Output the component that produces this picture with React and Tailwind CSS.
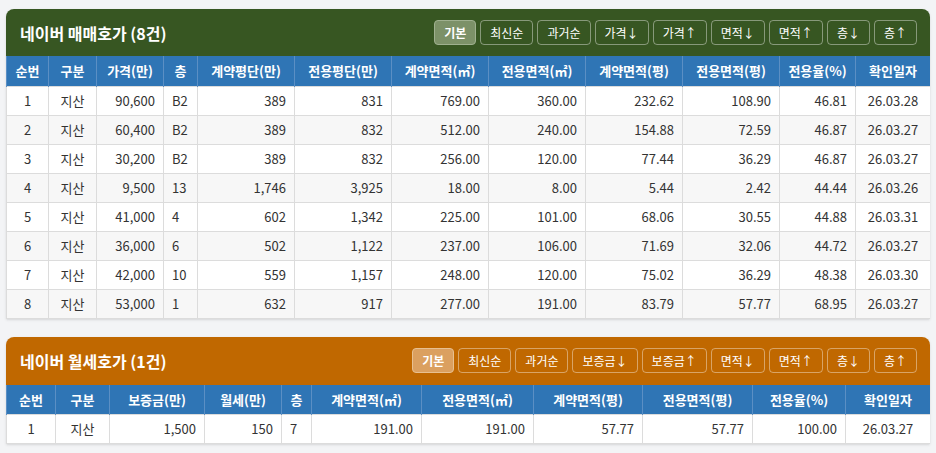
const F = { fontFamily: '"Noto Sans CJK KR", "Noto Sans", sans-serif' };

const sale = [
  ["1","지산","90,600","B2","389","831","769.00","360.00","232.62","108.90","46.81","26.03.28"],
  ["2","지산","60,400","B2","389","832","512.00","240.00","154.88","72.59","46.87","26.03.27"],
  ["3","지산","30,200","B2","389","832","256.00","120.00","77.44","36.29","46.87","26.03.27"],
  ["4","지산","9,500","13","1,746","3,925","18.00","8.00","5.44","2.42","44.44","26.03.26"],
  ["5","지산","41,000","4","602","1,342","225.00","101.00","68.06","30.55","44.88","26.03.31"],
  ["6","지산","36,000","6","502","1,122","237.00","106.00","71.69","32.06","44.72","26.03.27"],
  ["7","지산","42,000","10","559","1,157","248.00","120.00","75.02","36.29","48.38","26.03.30"],
  ["8","지산","53,000","1","632","917","277.00","191.00","83.79","57.77","68.95","26.03.27"],
];
const saleHead = ["순번","구분","가격(만)","층","계약평단(만)","전용평단(만)","계약면적(㎡)","전용면적(㎡)","계약면적(평)","전용면적(평)","전용율(%)","확인일자"];
const saleW = [42,48,67,34,97,97,97,97,97,97,76,75];
const saleAlign = ["c","c","r","l","r","r","r","r","r","r","r","c"];

const rentHead = ["순번","구분","보증금(만)","월세(만)","층","계약면적(㎡)","전용면적(㎡)","계약면적(평)","전용면적(평)","전용율(%)","확인일자"];
const rentW = [49,54,95,77,30,110,112,109,110,93,85];
const rentAlign = ["c","c","r","r","l","r","r","r","r","r","c"];
const rent = [["1","지산","1,500","150","7","191.00","191.00","57.77","57.77","100.00","26.03.27"]];

function Table({ head, widths, align, rows }) {
  return (
    <table className="w-full table-fixed border-collapse text-[13px]">
      <colgroup>{widths.map((w, i) => <col key={i} style={{ width: w }} />)}</colgroup>
      <thead>
        <tr className="h-[30px] bg-[#2f75b5] text-white font-bold">
          {head.map((h, i) => (
            <th key={i} className="border-x border-[#5b8fc4] px-1 text-center font-bold whitespace-nowrap">{h}</th>
          ))}
        </tr>
      </thead>
      <tbody>
        {rows.map((r, ri) => (
          <tr key={ri} className={"h-[29px] text-[#333] " + (ri % 2 ? "bg-[#f7f7f7]" : "bg-white")}>
            {r.map((c, i) => (
              <td key={i} className={"border border-[#dcdcdc] px-2 whitespace-nowrap " + (align[i] === "c" ? "text-center" : align[i] === "r" ? "text-right" : "text-left")}>{c}</td>
            ))}
          </tr>
        ))}
      </tbody>
    </table>
  );
}

function Btn({ children, active, orange }) {
  return (
    <button className={"h-[25px] rounded px-[9px] text-[12px] text-white border whitespace-nowrap " +
      (active ? (orange ? "bg-[#dba060] border-[#e8c090] font-bold" : "bg-[#7c9168] border-[#9fb08f] font-bold") : "border-white/40")}>
      {children}
    </button>
  );
}

export default function App() {
  return (
    <div style={F} className="bg-[#f3f4f6] w-[936px] h-[453px] px-[6px] pt-[9px] overflow-hidden">
      <div className="rounded-t-lg overflow-hidden shadow-sm">
        <div className="h-[47px] bg-[#375622] flex items-center justify-between pl-[14px] pr-[13px]">
          <div className="text-white font-bold text-[16px]">네이버 매매호가 (8건)</div>
          <div className="flex gap-[4px]">
            {["기본","최신순","과거순","가격↓","가격↑","면적↓","면적↑","층↓","층↑"].map((b, i) => <Btn key={b} active={i === 0}>{b}</Btn>)}
          </div>
        </div>
        <Table head={saleHead} widths={saleW} align={saleAlign} rows={sale} />
      </div>
      <div className="mt-[18px] rounded-t-lg overflow-hidden shadow-sm">
        <div className="h-[48px] bg-[#c06800] flex items-center justify-between pl-[14px] pr-[13px]">
          <div className="text-white font-bold text-[16px]">네이버 월세호가 (1건)</div>
          <div className="flex gap-[4px]">
            {["기본","최신순","과거순","보증금↓","보증금↑","면적↓","면적↑","층↓","층↑"].map((b, i) => <Btn key={b} orange active={i === 0}>{b}</Btn>)}
          </div>
        </div>
        <Table head={rentHead} widths={rentW} align={rentAlign} rows={rent} />
      </div>
    </div>
  );
}
